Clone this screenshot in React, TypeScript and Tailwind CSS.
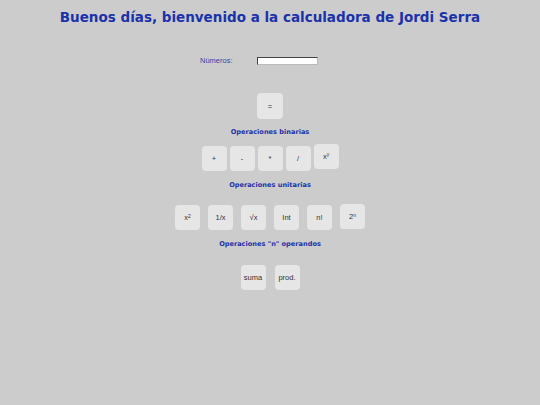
import React from 'react';

const btn =
  "w-[25px] h-[25px] rounded-[4px] bg-[#e6e6e6] flex items-center justify-center text-[7.5px] text-[#333] font-['Liberation_Sans',Arial,sans-serif]";

const label =
  "text-center text-[6.6px] font-bold text-[#1f33a8] font-['DejaVu_Sans',Verdana,sans-serif] leading-none";

export default function App() {
  return (
    <div className="w-[540px] h-[405px] bg-[#cccccc] flex flex-col items-center">
      {/* Title */}
      <h1 className="mt-[8px] text-[13.5px] leading-[18px] font-bold text-[#1a32aa] font-['DejaVu_Sans',Verdana,sans-serif]">
        Buenos días, bienvenido a la calculadora de Jordi Serra
      </h1>

      {/* Input row */}
      <div className="mt-[29px] flex items-center">
        <span className="w-[57px] text-[7.5px] text-[#3344aa] font-['Liberation_Sans',Arial,sans-serif]">
          Números:
        </span>
        <input
          type="text"
          className="w-[61px] h-[8px] bg-white border border-t-[#444] border-l-[#444] border-r-[#bbb] border-b-[#bbb] outline-none"
        />
        <div className="w-[22px]" />
      </div>

      {/* Equals */}
      <div className="mt-[27px]">
        <button className={`${btn} w-[26px] h-[26px]`}>=</button>
      </div>

      <div className={`${label} mt-[10px]`}>Operaciones binarias</div>

      <div className="mt-[8px] flex items-end gap-[3px]">
        <button className={btn}>+</button>
        <button className={btn}>-</button>
        <button className={btn}>*</button>
        <button className={btn}>/</button>
        <button className={`${btn} mb-[2px]`}>
          <span>
            x<sup className="text-[5px]">y</sup>
          </span>
        </button>
      </div>

      <div className={`${label} mt-[11px]`}>Operaciones unitarias</div>

      <div className="mt-[16px] flex items-end gap-[8px]">
        <button className={btn}>
          <span>
            x<sup className="text-[5px]">2</sup>
          </span>
        </button>
        <button className={btn}>1/x</button>
        <button className={btn}>√x</button>
        <button className={btn}>Int</button>
        <button className={btn}>n!</button>
        <button className={`${btn} mb-[1px]`}>
          <span>
            2<sup className="text-[5px]">n</sup>
          </span>
        </button>
      </div>

      <div className={`${label} mt-[11px]`}>Operaciones "n" operandos</div>

      <div className="mt-[17px] flex gap-[9px]">
        <button className={btn}>suma</button>
        <button className={btn}>prod.</button>
      </div>
    </div>
  );
}
